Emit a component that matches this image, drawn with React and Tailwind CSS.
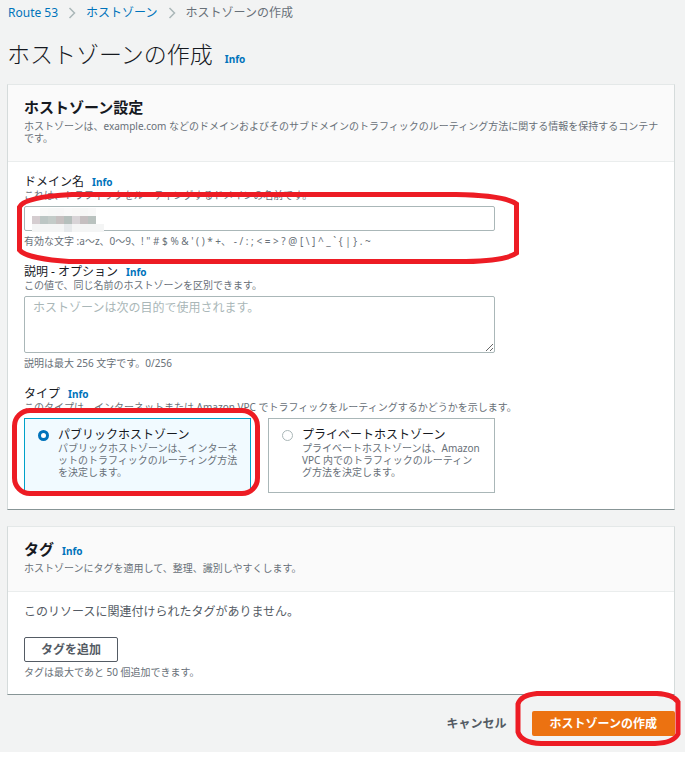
const INK = '#ed1c24';

function Info({ topic }) {
  return (
    <a href="#info" aria-label={`${topic} Info`} className="ml-2 text-[10px] leading-none font-bold text-[#0073bb]">
      Info
    </a>
  );
}

function Chevron() {
  return (
    <svg aria-hidden="true" viewBox="0 0 8 12" className="h-3 w-2 text-[#aab7b8]" fill="none" stroke="currentColor" strokeWidth="1.5">
      <path d="M1.5 1 6.5 6 1.5 11" />
    </svg>
  );
}

function Panel({ title, info, description, children }) {
  return (
    <section className="border border-x-[#d5dbdb] border-t-[#e4e8e8] border-b-[#879596] bg-white">
      <header className="border-b border-[#eaeded] bg-[#fafafa] pt-3 pr-3 pb-[17px] pl-4">
        <h2 className="text-[15px] leading-5 font-bold text-[#16191f]">
          {title}
          {info && <Info topic={title} />}
        </h2>
        <p className="mt-[3px] text-[10px] leading-3 text-[#687078]">{description}</p>
      </header>
      <div className="px-4 pt-[13px] pb-4">{children}</div>
    </section>
  );
}

function Hint({ children, id }) {
  return (
    <p id={id} className="text-[10px] leading-3 text-[#687078]">
      {children}
    </p>
  );
}

const MOSAIC = [
  ['#d5cdd0', '#ffffff'],
  ['#bcc6c4', '#f9f9f8'],
  ['#c3cbc8', '#f7f8f7'],
  ['#c6c0c0', '#f7f7f7'],
  ['#b5bfbc', '#f9f9f9'],
  ['#d8d4d7', '#f8f8f7'],
  ['#c5bfc0', '#f6f7f6'],
  ['#b9c2bf', '#f8f8f8'],
];

function Mosaic() {
  return (
    <svg aria-hidden="true" className="pointer-events-none absolute top-[2px] left-2 h-6 w-[72px]" viewBox="0 0 72 24" shapeRendering="crispEdges">
      {MOSAIC.map(([dark, light], i) => (
        <g key={i}>
          <rect x={i * 8} y="0" width="8" height="8" fill={light} />
          <rect x={i * 8} y="8" width="8" height="8" fill={dark} />
        </g>
      ))}
      <rect x="0" y="16" width="72" height="8" fill="#f4f5f5" />
      <rect x="32" y="16" width="8" height="8" fill="#e6e9eb" />
    </svg>
  );
}

function Option({ title, description, value, defaultChecked, children }) {
  return (
    <label className="relative flex flex-1 gap-[9px] border border-[#aab7b8] bg-white py-[9px] pr-3 pl-[13px] has-checked:border-[#00a1c9] has-checked:bg-[#f1faff]">
      <input
        type="radio"
        name="zone-type"
        value={value}
        defaultChecked={defaultChecked}
        className="mt-[2px] size-[11px] shrink-0 appearance-none rounded-full border border-[#aab7b8] bg-white checked:border-3 checked:border-[#0073bb]"
      />
      <span className="block">
        <span className="block text-xs leading-[14px] text-[#16191f]">{title}</span>
        <span className="block text-[10px] leading-3 text-[#687078]">{description}</span>
      </span>
      {children}
    </label>
  );
}

export default function App() {
  return (
    <div lang="ja" className="bg-white font-['Noto_Sans','Noto_Sans_CJK_JP',sans-serif] text-xs text-[#16191f]">
      <main className="bg-[#f2f3f3] pt-[5px] pr-[10px] pb-4 pl-[7px]">
        <nav aria-label="Breadcrumb" className="flex items-center gap-[10px] pl-px leading-4">
          <a href="#route53" className="text-[#0073bb]">Route 53</a>
          <Chevron />
          <a href="#zones" className="text-[#0073bb]">ホストゾーン</a>
          <Chevron />
          <span className="text-[#687078]">ホストゾーンの作成</span>
        </nav>

        <div className="mt-[19px] mb-4 flex items-baseline gap-1">
          <h1 className="text-[23px] leading-7 font-light">ホストゾーンの作成</h1>
          <Info topic="ホストゾーンの作成" />
        </div>

        <Panel
          title="ホストゾーン設定"
          description="ホストゾーンは、example.com などのドメインおよびそのサブドメインのトラフィックのルーティング方法に関する情報を保持するコンテナです。"
        >
          <div className="leading-[14px]">
            <label htmlFor="domain">ドメイン名</label>
            <Info topic="ドメイン名" />
          </div>
          <Hint>これは、トラフィックをルーティングするドメインの名前です。</Hint>
          <div className="relative mt-[5px] mb-1 max-w-[471px]">
            <input id="domain" type="text" aria-describedby="domain-hint" className="block h-[25px] w-full rounded-xs border border-[#aab7b8] bg-white px-2 text-xs" />
            <Mosaic />
            <svg aria-hidden="true" className="pointer-events-none absolute -top-[15px] -left-2 z-10 h-[74px] w-[504px]" viewBox="0 0 504 74" fill="none" stroke={INK} strokeWidth="5">
              <path d="M3.5 16C7 9 25 5 56 3.5H440C470 4 492 7 500.5 13V62C494 67 476 70 450 70.5H53C30 69 8 65 3.5 59Z" />
            </svg>
          </div>
          <Hint id="domain-hint">{'有効な文字 :a～z、0～9、! " # $ % & \' ( ) * +、 - / : ; < = > ? @ [ \\ ] ^ _ ` { | } . ~'}</Hint>

          <div className="mt-[18px] leading-[14px]">
            <label htmlFor="description">説明 - オプション</label>
            <Info topic="説明" />
          </div>
          <Hint>この値で、同じ名前のホストゾーンを区別できます。</Hint>
          <textarea
            id="description"
            placeholder="ホストゾーンは次の目的で使用されます。"
            className="mt-[5px] mb-1 block h-[57px] w-full max-w-[471px] rounded-xs border border-[#aab7b8] bg-white px-2 py-1 text-xs leading-[14px] placeholder:text-[#aab7b8]"
          />
          <Hint>説明は最大 256 文字です。0/256</Hint>

          <fieldset className="mt-[18px]">
            <legend className="leading-[14px]">
              タイプ
              <Info topic="タイプ" />
            </legend>
            <Hint>このタイプは、インターネットまたは Amazon VPC でトラフィックをルーティングするかどうかを示します。</Hint>
            <div className="mt-[5px] flex min-h-[75px] max-w-[471px] gap-[17px]">
              <Option
                title="パブリックホストゾーン"
                description="パブリックホストゾーンは、インターネットのトラフィックのルーティング方法を決定します。"
                value="public"
                defaultChecked
              >
                <span aria-hidden="true" className="pointer-events-none absolute -top-[11px] -right-[10px] -bottom-1 -left-[13px] rounded-[18px] border-5 border-[#ed1c24]" />
              </Option>
              <Option
                title="プライベートホストゾーン"
                description="プライベートホストゾーンは、Amazon VPC 内でのトラフィックのルーティング方法を決定します。"
                value="private"
              />
            </div>
          </fieldset>
        </Panel>

        <div className="mt-4">
          <Panel title="タグ" info description="ホストゾーンにタグを適用して、整理、識別しやすくします。">
            <p className="leading-[14px] text-[#545b64]">このリソースに関連付けられたタグがありません。</p>
            <button type="button" className="mt-[18px] mb-1 block h-[25px] rounded-xs border border-[#545b64] bg-white px-4 font-bold text-[#545b64]">
              タグを追加
            </button>
            <Hint>タグは最大であと 50 個追加できます。</Hint>
          </Panel>
        </div>

        <div className="mt-4 flex justify-end gap-2">
          <button type="button" className="h-[25px] px-[17px] font-bold text-[#545b64]">キャンセル</button>
          <div className="relative">
            <button type="submit" className="h-[25px] rounded-xs bg-[#ec7211] px-[18px] font-bold text-white">ホストゾーンの作成</button>
            <svg aria-hidden="true" className="pointer-events-none absolute -top-5 -right-[6px] h-[56px] w-[166px]" viewBox="0 0 166 56" fill="none" stroke={INK} strokeWidth="5">
              <path d="M22 2.5H142C154 3 160 6 163 11V43C160 49 152 52 140 52.5H26C12 52 5 48 3 41V13C5 7 10 4 22 2.5Z" />
            </svg>
          </div>
        </div>
      </main>
    </div>
  );
}
